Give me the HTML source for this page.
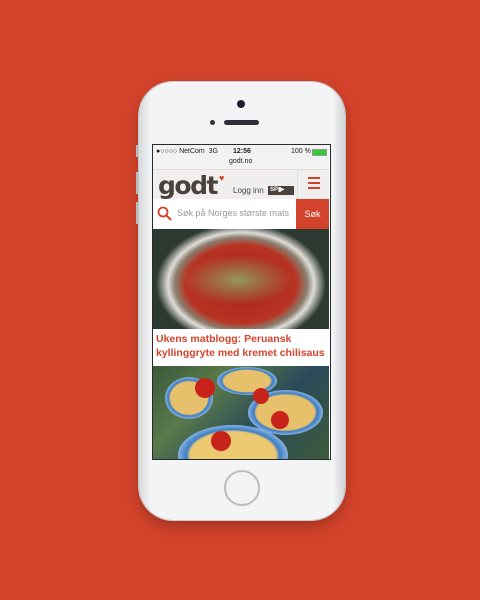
<!DOCTYPE html>
<html><head><style>
body{margin:0;width:480px;height:600px;background:#d3432b;position:relative;overflow:hidden;font-family:"Liberation Sans",sans-serif}
.abs{position:absolute}
.phone{left:139px;top:82px;width:206px;height:438px;border-radius:34px;background:linear-gradient(90deg,#d8d9db,#f3f4f6 6%,#f3f4f6 94%,#d2d3d5);box-shadow:0 0 0 1px #c9cacc,0 6px 14px rgba(0,0,0,.25)}
.screen{left:152px;top:144px;width:179px;height:316px;background:#fff;border:1.5px solid #2a2a2a;box-sizing:border-box;overflow:hidden}
</style></head><body>
<div class="abs" style="left:276px;top:81px;width:30px;height:3px;background:#ddd;border-radius:2px"></div>
<div class="abs" style="left:136px;top:145px;width:4px;height:12px;background:#ccc"></div>
<div class="abs" style="left:136px;top:172px;width:4px;height:22px;background:#ccc"></div>
<div class="abs" style="left:136px;top:202px;width:4px;height:22px;background:#ccc"></div>
<div class="abs phone"></div>
<div class="abs" style="left:237px;top:100px;width:8px;height:8px;border-radius:50%;background:#1d1f2e"></div>
<div class="abs" style="left:210px;top:120px;width:5px;height:5px;border-radius:50%;background:#333"></div>
<div class="abs" style="left:224px;top:120px;width:35px;height:5px;border-radius:3px;background:#2d2f38"></div>
<div class="abs" style="left:224px;top:470px;width:36px;height:36px;border-radius:50%;border:2px solid #bbb;box-sizing:border-box;background:#f2f3f5"></div>
<div class="abs screen">
 <div class="abs" style="left:0;top:0;width:176px;height:24px;background:#f2f2f2;font-size:7px;color:#222">
  <span class="abs" style="left:3px;top:3px">●○○○○ NetCom &nbsp;3G</span>
  <span class="abs" style="left:80px;top:3px;font-weight:bold">12:56</span>
  <span class="abs" style="left:138px;top:3px">100 %</span>
  <span class="abs" style="left:159px;top:4px;width:13px;height:5px;background:#3c3;border:1px solid #999"></span>
  <span class="abs" style="left:76px;top:13px">godt.no</span>
 </div>
 <div class="abs" style="left:0;top:24px;width:176px;height:30px;background:#f0efed;border-top:1px solid #ddd">
  <span class="abs" style="left:5px;top:1px;font-size:25px;font-family:'DejaVu Sans',sans-serif;font-weight:bold;color:#4a403c;letter-spacing:-1.5px;line-height:30px">godt</span>
  <span class="abs" style="left:66px;top:3px;color:#d3432b;font-size:9px">♥</span>
  <span class="abs" style="left:80px;top:16px;font-size:8px;color:#444">Logg inn</span>
  <span class="abs" style="left:115px;top:16px;width:26px;height:9px;background:#4a403c;color:#fff;font-size:6px;font-weight:bold;line-height:9px;text-indent:2px">SP▮▸</span>
  <div class="abs" style="left:144px;top:0;width:1px;height:30px;background:#ddd"></div>
  <div class="abs" style="left:155px;top:7px;width:12px;height:2px;background:#d3432b;box-shadow:0 5px 0 #d3432b,0 10px 0 #d3432b"></div>
 </div>
 <div class="abs" style="left:0;top:54px;width:176px;height:30px;background:#fff">
  <svg class="abs" style="left:4px;top:7px" width="16" height="16"><circle cx="6" cy="6" r="4.5" fill="none" stroke="#d3432b" stroke-width="1.8"/><line x1="9.5" y1="9.5" x2="14" y2="14" stroke="#d3432b" stroke-width="2"/></svg>
  <span class="abs" style="left:24px;top:9px;font-size:9px;color:#999;white-space:nowrap">Søk på Norges største mats</span>
  <div class="abs" style="left:143px;top:0;width:33px;height:30px;background:#d3432b;color:#fff;font-size:9px;line-height:30px;text-align:center">Søk</div>
 </div>
 <div class="abs" style="left:0;top:84px;width:176px;height:100px;background:radial-gradient(ellipse 85px 60px at 88px 55px,#a8241c 0,#b83322 65%,#8a8070 78%,#e0ddd8 86%,#2d3a32 100%)"></div>
 <div class="abs" style="left:30px;top:110px;width:110px;height:50px;background:radial-gradient(ellipse at 50% 50%,rgba(140,190,110,.75),rgba(140,190,110,0) 70%)"></div>
 <div class="abs" style="left:0;top:184px;width:176px;height:37px;background:#fff;color:#d3432b;font-size:10.5px;font-weight:bold;line-height:14px;padding:3px 3px;box-sizing:border-box;white-space:nowrap">Ukens matblogg: Peruansk<br>kyllinggryte med kremet chilisaus</div>
 <div class="abs" style="left:0;top:221px;width:176px;height:95px;background:linear-gradient(135deg,#3a5a3c,#5a7a4a 30%,#2a4a5a 60%,#3d5c3a)"></div>
 <div class="abs" style="left:12px;top:232px;width:48px;height:42px;border-radius:50%;background:radial-gradient(#e6c06a 55%,#3a7ec8 60%,#cde 80%)"></div>
 <div class="abs" style="left:64px;top:222px;width:60px;height:28px;border-radius:50%;background:radial-gradient(#e6c06a 55%,#3a7ec8 60%,#cde 80%)"></div>
 <div class="abs" style="left:95px;top:245px;width:75px;height:45px;border-radius:50%;background:radial-gradient(#e6c06a 55%,#3a7ec8 60%,#cde 80%)"></div>
 <div class="abs" style="left:25px;top:280px;width:110px;height:60px;border-radius:50%;background:radial-gradient(#ecc870 55%,#3a7ec8 60%,#cde 80%)"></div>
 <div class="abs" style="left:42px;top:233px;width:20px;height:20px;border-radius:50%;background:#c8231a"></div>
 <div class="abs" style="left:100px;top:243px;width:16px;height:16px;border-radius:50%;background:#c8231a"></div>
 <div class="abs" style="left:118px;top:266px;width:18px;height:18px;border-radius:50%;background:#c8231a"></div>
 <div class="abs" style="left:58px;top:286px;width:20px;height:20px;border-radius:50%;background:#c8231a"></div>
</div>
</body></html>
